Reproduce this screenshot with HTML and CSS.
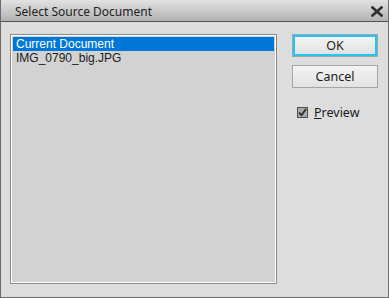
FILE: index.html
```html
<!DOCTYPE html>
<html lang="en">
<head>
  <meta charset="UTF-8">
  <title>Select Source Document</title>
  <link rel="stylesheet" href="styles.css">
</head>
<body>

  <div class="dialog">
    <div class="titlebar">
      <span class="title">Select Source Document</span>
      <svg class="close" width="12" height="11" viewBox="0 0 12 11">
        <path d="M1.5 1.5 L10.5 9.5 M10.5 1.5 L1.5 9.5" stroke="#303030" stroke-width="2.6" stroke-linecap="square"/>
      </svg>
    </div>

    <div class="content">
      <div class="list">
        <div class="item selected">Current Document</div>
        <div class="item">IMG_0790_big.JPG</div>
      </div>

      <div class="side">
        <button class="btn primary">OK</button>
        <button class="btn">Cancel</button>
        <label class="check">
          <span class="box">
            <svg width="9" height="9" viewBox="0 0 9 9">
              <path d="M1 4.5 L3.5 7.2 L8 1" fill="none" stroke="#2a2a2a" stroke-width="1.8"/>
            </svg>
          </span>
          <span><u>P</u>review</span>
        </label>
      </div>
    </div>
  </div>

</body>
</html>
```

FILE: styles.css
```css
body {
  margin: 0;
  font-family: "Noto Sans", "DejaVu Sans", sans-serif;
  font-size: 12px;
  color: #1a1a1a;
}
.dialog {
  width: 389px;
  height: 298px;
  box-sizing: border-box;
  border: 1px solid #6b6b6b;
  border-top: none;
  background: #dddddd;
  display: flex;
  flex-direction: column;
}
.titlebar {
  height: 21px;
  border-bottom: 1px solid #555555;
  background: linear-gradient(#e2e2e2, #b2b2b2);
  display: flex;
  align-items: center;
  justify-content: space-between;
  padding: 0 5px 0 14px;
}
.title {
  font-size: 12px;
  color: #222;
  padding-top: 1px;
}
.close {
  display: block;
  margin-top: 1px;
}
.content {
  display: flex;
  padding: 12px 0 0 9px;
}
.list {
  width: 262px;
  height: 245px;
  background: #d2d2d2;
  border: 1px solid #ffffff;
  box-shadow: 0 0 0 1px #8a8a8a;
  margin: 1px;
  padding: 1px 0 0 1px;
  box-sizing: content-box;
}
.item {
  height: 14px;
  line-height: 14px;
  padding-left: 3px;
  margin-right: 1px;
  white-space: nowrap;
  font-family: "Liberation Sans", Arial, sans-serif;
  font-size: 12px;
}
.selected {
  background: #0078d7;
  color: #ffffff;
}
.side {
  margin-left: 15px;
  width: 86px;
  display: flex;
  flex-direction: column;
}
.btn {
  width: 86px;
  height: 23px;
  margin: 0 0 8px 0;
  padding: 0;
  font-family: "Noto Sans", "DejaVu Sans", sans-serif;
  font-size: 12.5px;
  color: #1a1a1a;
  background: linear-gradient(#f4f4f4, #e2e2e2);
  border: 1px solid #a5a5a5;
}
.primary {
  border: 2px solid #1fc7f7;
  box-shadow: 0 0 0 1px #a5a5a5;
  width: 84px;
  height: 21px;
  margin: 1px 1px 9px 1px;
}
.check {
  display: flex;
  align-items: center;
  margin: 8px 0 0 5px;
  font-size: 12.5px;
}
.box {
  width: 9px;
  height: 9px;
  border: 1px solid #505050;
  background: #a9a9a9;
  margin-right: 6px;
  display: flex;
}
```
